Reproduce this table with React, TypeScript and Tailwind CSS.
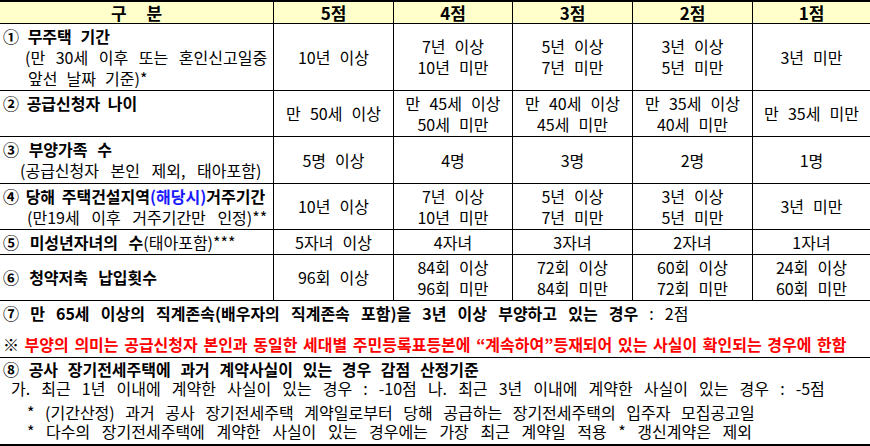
import React from "react";

type Row = {
  h: string;
  align: string;
  label: React.ReactNode;
  cells: string[][];
};

const rows: Row[] = [
  {
    h: "h-[67px]",
    align: "justify-center",
    label: (
      <>
        <div className="font-bold [word-spacing:5px]">① 무주택 기간</div>
        <div className="pl-[22px] [word-spacing:7px]">(만 30세 이후 또는 혼인신고일중</div>
        <div className="pl-[25px] [word-spacing:5.5px]">앞선 날짜 기준)*</div>
      </>
    ),
    cells: [["10년 이상"], ["7년 이상", "10년 미만"], ["5년 이상", "7년 미만"], ["3년 이상", "5년 미만"], ["3년 미만"]],
  },
  {
    h: "h-[46px]",
    align: "justify-start pt-[2px]",
    label: <div className="font-bold [word-spacing:4px]">② 공급신청자 나이</div>,
    cells: [["만 50세 이상"], ["만 45세 이상", "50세 미만"], ["만 40세 이상", "45세 미만"], ["만 35세 이상", "40세 미만"], ["만 35세 미만"]],
  },
  {
    h: "h-[47px]",
    align: "justify-center",
    label: (
      <>
        <div className="font-bold [word-spacing:6px]">③ 부양가족 수</div>
        <div className="pl-[17px] [word-spacing:8px]">(공급신청자 본인 제외, 태아포함)</div>
      </>
    ),
    cells: [["5명 이상"], ["4명"], ["3명"], ["2명"], ["1명"]],
  },
  {
    h: "h-[46px]",
    align: "justify-center",
    label: (
      <>
        <div className="font-bold [word-spacing:3px]">
          ④ 당해 주택건설지역<span className="text-[#1a1aff]">(해당시)</span>거주기간
        </div>
        <div className="pl-[24px] [word-spacing:8px]">(만19세 이후 거주기간만 인정)**</div>
      </>
    ),
    cells: [["10년 이상"], ["7년 이상", "10년 미만"], ["5년 이상", "7년 미만"], ["3년 이상", "5년 미만"], ["3년 미만"]],
  },
  {
    h: "h-[25px]",
    align: "justify-center",
    label: (
      <div className="[word-spacing:7px]">
        <span className="font-bold">⑤ 미성년자녀의 수</span>(태아포함)***
      </div>
    ),
    cells: [["5자녀 이상"], ["4자녀"], ["3자녀"], ["2자녀"], ["1자녀"]],
  },
  {
    h: "h-[46px]",
    align: "justify-center",
    label: <div className="font-bold [word-spacing:6.5px]">⑥ 청약저축 납입횟수</div>,
    cells: [["96회 이상"], ["84회 이상", "96회 미만"], ["72회 이상", "84회 미만"], ["60회 이상", "72회 미만"], ["24회 이상", "60회 미만"]],
  },
];

const gridCols = "grid grid-cols-[274px_120px_119px_120px_120px_1fr]";

export default function App() {
  return (
    <div className="w-[870px] h-[446px] bg-white text-black text-[16px] leading-[21px] font-['Noto_Sans_CJK_KR','Noto_Sans',sans-serif] whitespace-nowrap overflow-hidden">
      {/* header */}
      <div className={`${gridCols} h-[24px] border-t-2 border-b border-black bg-[#ffffcc] font-bold text-[17px]`}>
        <div className="border-r border-black flex items-center justify-center [word-spacing:16px]">구 분</div>
        <div className="border-r border-black flex items-center justify-center">5점</div>
        <div className="border-r border-black flex items-center justify-center">4점</div>
        <div className="border-r border-black flex items-center justify-center">3점</div>
        <div className="border-r border-black flex items-center justify-center">2점</div>
        <div className="flex items-center justify-center">1점</div>
      </div>

      {rows.map((r, i) => (
        <div key={i} className={`${gridCols} ${r.h} border-b border-black`}>
          <div className={`border-r border-black flex flex-col pl-[3px] ${r.align}`}>{r.label}</div>
          {r.cells.map((c, j) => (
            <div
              key={j}
              className={`flex flex-col items-center justify-center [word-spacing:5.5px] ${j < 4 ? "border-r border-black" : ""}`}
            >
              {c.map((t, k) => (
                <div key={k}>{t}</div>
              ))}
            </div>
          ))}
        </div>
      ))}

      {/* ⑦ and note */}
      <div className="h-[57px] border-b border-black pl-[3px] pt-[2px] flex flex-col">
        <div className="[word-spacing:7.5px]">
          <span className="font-bold">⑦ 만 65세 이상의 직계존속(배우자의 직계존속 포함)을 3년 이상 부양하고 있는 경우</span> : 2점
        </div>
        <div className="mt-[10px] [word-spacing:2px]">
          ※ <span className="text-[#ff0000] font-bold">부양의 의미는 공급신청자 본인과 동일한 세대별 주민등록표등본에 “계속하여”등재되어 있는 사실이 확인되는 경우에 한함</span>
        </div>
      </div>

      {/* ⑧ */}
      <div className="h-[88px] border-b-2 border-black pt-[2px] leading-[19px]">
        <div className="pl-[3px] font-bold [word-spacing:6px]">⑧ 공사 장기전세주택에 과거 계약사실이 있는 경우 감점 산정기준</div>
        <div className="pl-[11px] [word-spacing:7.5px]">
          가. 최근 1년 이내에 계약한 사실이 있는 경우 : -10점 나. 최근 3년 이내에 계약한 사실이 있는 경우 : -5점
        </div>
        <div className="pl-[27px] mt-[5px] [word-spacing:7px]">* (기간산정) 과거 공사 장기전세주택 계약일로부터 당해 공급하는 장기전세주택의 입주자 모집공고일</div>
        <div className="pl-[27px] [word-spacing:8px]">* 다수의 장기전세주택에 계약한 사실이 있는 경우에는 가장 최근 계약일 적용 * 갱신계약은 제외</div>
      </div>
    </div>
  );
}
